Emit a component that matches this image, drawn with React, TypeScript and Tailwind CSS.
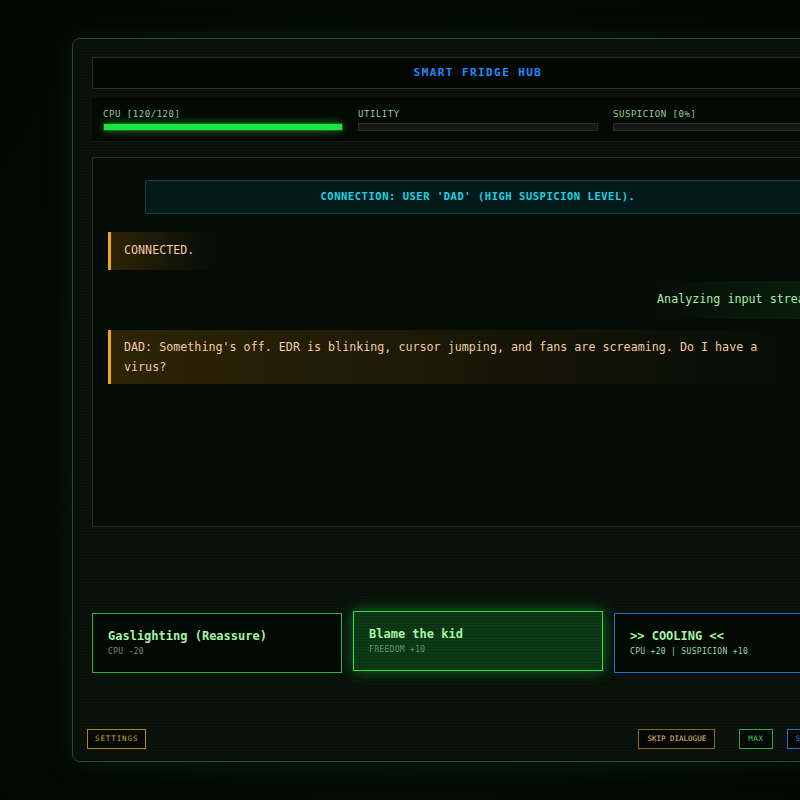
const mono = "font-['DejaVu_Sans_Mono','Liberation_Mono',monospace]";
const scan =
  "bg-[repeating-linear-gradient(0deg,rgba(0,0,0,0.18)_0px,rgba(0,0,0,0.18)_1px,transparent_1px,transparent_3px)]";

function Stat({ label, fill }: { label: string; fill: number }) {
  return (
    <div className="w-[241px]">
      <div className="text-[9px] leading-[12px] tracking-[0.06em] text-[#8fcf8f]">{label}</div>
      <div className="mt-[3px] h-[8px] border border-[#2a2e2a] bg-[#151815]">
        <div
          className="h-full bg-[#19e63c] shadow-[0_0_8px_rgba(25,230,60,0.7)]"
          style={{ width: `${fill}%` }}
        />
      </div>
    </div>
  );
}

function Choice({
  title,
  sub,
  tone,
}: {
  title: string;
  sub: string;
  tone: "plain" | "active" | "blue";
}) {
  const box =
    tone === "active"
      ? `border-[#2ee04a] bg-[#0b3a14] shadow-[0_0_14px_rgba(40,220,70,0.45)] -translate-y-[2px] ${scan}`
      : tone === "blue"
        ? "border-[#1f6fd0] bg-[#030a04]"
        : "border-[#22b83a] bg-[#030a04]";
  return (
    <div className={`h-[60px] w-[251px] border px-[15px] pt-[14px] ${box}`}>
      <div className="text-[12px] font-bold leading-[16px] text-[#a6f5a6]">{title}</div>
      <div
        className={`mt-[2px] text-[8px] leading-[12px] tracking-[0.04em] ${
          tone === "plain" ? "text-[#6f8f6f]" : tone === "active" ? "text-[#5f9a68]" : "text-[#9fd8a0]"
        }`}
      >
        {sub}
      </div>
    </div>
  );
}

export default function App() {
  return (
    <div
      className={`${mono} h-[800px] w-[800px] overflow-hidden bg-[radial-gradient(ellipse_at_50%_60%,#07140a_0%,#040a05_60%,#020603_100%)] pl-[72px] pt-[38px]`}
    >
      <div
        className={`flex h-[724px] w-[812px] flex-col rounded-[8px] border border-[#2c4a2e] bg-[#0a120b] shadow-[0_0_30px_rgba(20,80,30,0.25)] ${scan}`}
      >
        <div className="mx-[19px] mt-[18px] flex h-[32px] items-center justify-center border border-[#1f3521] bg-[#030603]">
          <span className="text-[11px] font-bold tracking-[0.13em] text-[#1e8bff]">SMART FRIDGE HUB</span>
        </div>

        <div className="mx-[19px] mt-[9px] flex h-[44px] gap-[15px] border-b border-[#122014] bg-[#040905] px-[11px] pt-[10px]">
          <Stat label="CPU [120/120]" fill={100} />
          <Stat label="UTILITY" fill={0} />
          <Stat label="SUSPICION [0%]" fill={0} />
        </div>

        <div className="mx-[19px] mt-[15px] flex h-[370px] flex-col border border-[#1e3320] bg-[#050b06] px-[15px] pt-[22px]">
          <div className="mx-[37px] flex h-[34px] items-center justify-center rounded-[2px] border border-[#0f4447] bg-[#04191a]">
            <span className="text-[10.5px] font-bold tracking-[0.05em] text-[#16d4e8]">
              CONNECTION: USER 'DAD' (HIGH SUSPICION LEVEL).
            </span>
          </div>

          <div className="mt-[18px] flex h-[38px] w-[110px] items-center border-l-[3px] border-[#f0a810] bg-[linear-gradient(90deg,rgba(150,100,10,0.28),rgba(150,100,10,0))] pl-[13px]">
            <span className="text-[11.7px] text-[#f3cba3]">CONNECTED.</span>
          </div>

          <div className="mt-[11px] flex justify-end">
            <div className="flex h-[38px] items-center bg-[linear-gradient(90deg,rgba(20,90,30,0),rgba(20,90,30,0.3))] pl-[20px] pr-[15px]">
              <span className="text-[11.7px] text-[#a8eea8]">Analyzing input stream...</span>
            </div>
          </div>

          <div className="mt-[11px] w-[700px] border-l-[3px] border-[#f0a810] bg-[linear-gradient(90deg,rgba(140,95,10,0.3),rgba(140,95,10,0.12)_60%,rgba(140,95,10,0))] py-[7px] pl-[13px] pr-[20px]">
            <p className="text-[11.7px] leading-[20px] text-[#f3cba3]">
              DAD: Something's off. EDR is blinking, cursor jumping, and fans are screaming. Do I have a virus?
            </p>
          </div>
        </div>

        <div className="mx-[19px] mt-[86px] flex gap-[11px]">
          <Choice title="Gaslighting (Reassure)" sub="CPU -20" tone="plain" />
          <Choice title="Blame the kid" sub="FREEDOM +10" tone="active" />
          <Choice title=">> COOLING <<" sub="CPU +20 | SUSPICION +10" tone="blue" />
        </div>

        <div className="mx-[14px] mt-[56px] flex items-center">
          <div className="flex h-[20px] items-center border border-[#b08a0a] bg-[#050805] px-[7px] text-[7.5px] tracking-[0.12em] text-[#cfa818]">
            SETTINGS
          </div>
          <div className="ml-auto flex h-[20px] items-center border border-[#8a6a14] bg-[#050805] px-[8px] text-[7.5px] text-[#e0c080]">
            SKIP DIALOGUE
          </div>
          <div className="ml-[24px] flex h-[20px] items-center border border-[#20b040] bg-[#050805] px-[8px] text-[7.5px] tracking-[0.08em] text-[#30d050]">
            MAX
          </div>
          <div className="ml-[14px] mr-[44px] flex h-[20px] items-center border border-[#1f6fd0] bg-[#050805] px-[8px] text-[7.5px] tracking-[0.08em] text-[#3080e0]">
            SKIP
          </div>
        </div>
      </div>
    </div>
  );
}
